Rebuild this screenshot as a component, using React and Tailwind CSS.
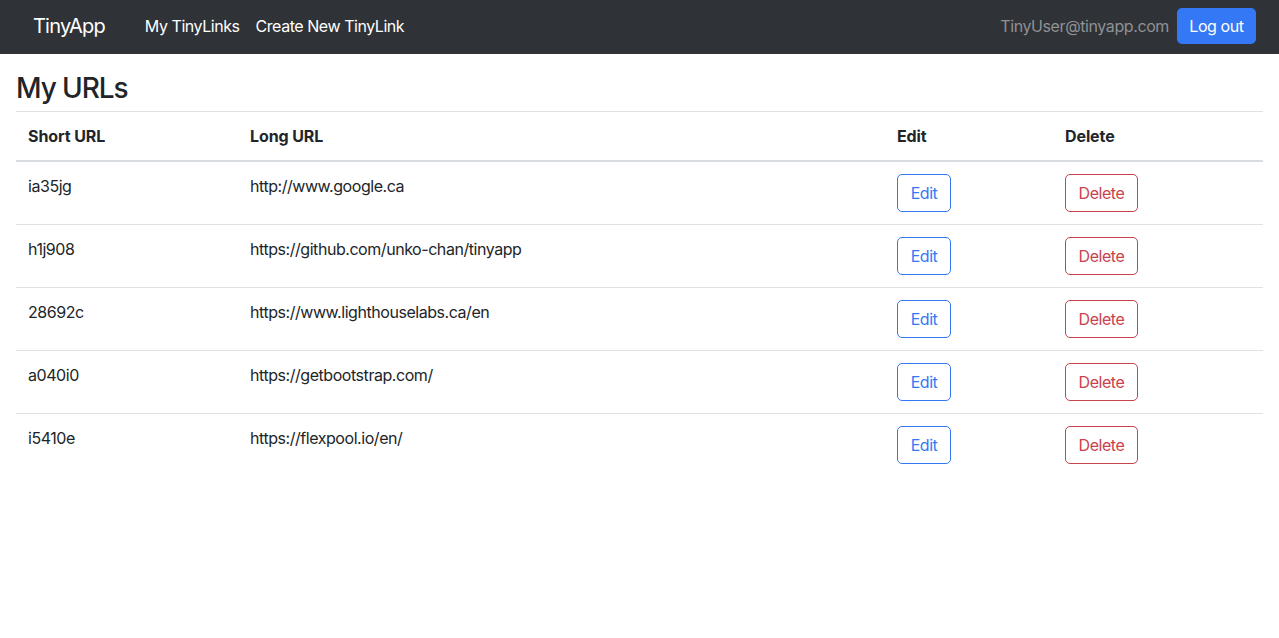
import React from "react";

const rows = [
  ["ia35jg", "http://www.google.ca"],
  ["h1j908", "https://github.com/unko-chan/tinyapp"],
  ["28692c", "https://www.lighthouselabs.ca/en"],
  ["a040i0", "https://getbootstrap.com/"],
  ["i5410e", "https://flexpool.io/en/"],
];

export default function App() {
  return (
    <div className="min-h-[638px] bg-white text-[#212529]" style={{ fontFamily: "Inter, 'Noto Sans', Arial, sans-serif" }}>
      <nav className="h-[54px] bg-[#2f3237] flex items-center pl-[33px] pr-[23px] pb-[2px]">
        <span className="text-white text-[20px] tracking-[-0.8px] mr-[40px]">TinyApp</span>
        <a className="text-white text-[16px] tracking-[-0.45px] mr-[16px]">My TinyLinks</a>
        <a className="text-white text-[16px] tracking-[-0.45px]">Create New TinyLink</a>
        <div className="flex-1" />
        <span className="text-[#909194] text-[16px] tracking-[-0.4px] mr-[8px]">TinyUser@tinyapp.com</span>
        <button className="h-[36px] w-[79px] rounded-[5px] bg-[#3478f6] text-white text-[16px] tracking-[-0.4px]">Log out</button>
      </nav>
      <div className="px-[16px]">
        <h3 className="mt-[17px] mb-[6px] text-[28px] leading-[34px] font-medium tracking-[-1.1px]">My URLs</h3>
        <table className="w-full border-collapse text-[16px] leading-[24px] tracking-[-0.45px]">
          <colgroup>
            <col className="w-[222px]" />
            <col className="w-[647px]" />
            <col className="w-[168px]" />
            <col />
          </colgroup>
          <thead>
            <tr className="border-t border-[#dee2e6] border-b-2 border-b-[#d9dce0]">
              <th className="text-left font-bold tracking-[-0.1px] px-[12px] py-[12px]">Short URL</th>
              <th className="text-left font-bold tracking-[-0.1px] px-[12px] py-[12px]">Long URL</th>
              <th className="text-left font-bold tracking-[-0.1px] px-[12px] py-[12px]">Edit</th>
              <th className="text-left font-bold tracking-[-0.1px] px-[12px] py-[12px]">Delete</th>
            </tr>
          </thead>
          <tbody>
            {rows.map(([s, l], i) => (
              <tr key={s} className={i < rows.length - 1 ? "border-b border-[#dee2e6]" : ""}>
                <td className="align-top px-[12px] pt-[12px] pb-[12px]">{s}</td>
                <td className="align-top px-[12px] pt-[12px] pb-[12px]">{l}</td>
                <td className="align-top px-[12px] pt-[12px] pb-[12px]">
                  <button className="h-[38px] w-[54px] text-center border border-[#3478f6] text-[#3478f6] rounded-[5px] bg-white">Edit</button>
                </td>
                <td className="align-top px-[12px] pt-[12px] pb-[12px]">
                  <button className="h-[38px] w-[73px] text-center border border-[#c9424d] text-[#c9424d] rounded-[5px] bg-white">Delete</button>
                </td>
              </tr>
            ))}
          </tbody>
        </table>
      </div>
    </div>
  );
}
